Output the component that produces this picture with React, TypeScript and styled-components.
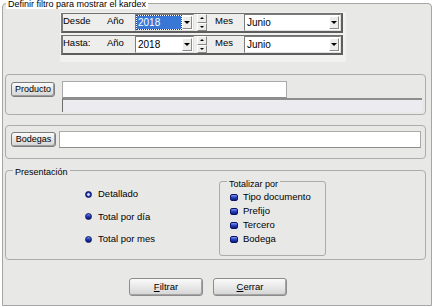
import styled, { createGlobalStyle } from "styled-components"

const GlobalStyle = createGlobalStyle`
  html, body {
    margin: 0;
    padding: 0;
    background: #ffffff;
  }
  body {
    font-family: "Liberation Sans", Arial, sans-serif;
    font-size: 9px;
    color: #000;
  }
`

const App = () => {
  return (
    <>
      <GlobalStyle />
      <Frame>
        <Legend $left={3} $top={-5} $bg="#ffffff">Definir filtro para mostrar el kardex</Legend>
        <DatePanel>
          <DateRow>
            <RowLabel $w={44}>Desde</RowLabel>
            <RowLabel $w={28}>Año</RowLabel>
            <Combo $w={59}>
              <ComboValue $selected>2018</ComboValue>
              <DropButton />
            </Combo>
            <Spinner>
              <SpinButton $up />
              <SpinButton />
            </Spinner>
            <RowLabel $w={29}>Mes</RowLabel>
            <Combo $w={97}>
              <ComboValue>Junio</ComboValue>
              <DropButton />
            </Combo>
          </DateRow>
          <DateRow>
            <RowLabel $w={44}>Hasta:</RowLabel>
            <RowLabel $w={28}>Año</RowLabel>
            <Combo $w={59}>
              <ComboValue>2018</ComboValue>
              <DropButton />
            </Combo>
            <Spinner>
              <SpinButton $up />
              <SpinButton />
            </Spinner>
            <RowLabel $w={29}>Mes</RowLabel>
            <Combo $w={97}>
              <ComboValue>Junio</ComboValue>
              <DropButton />
            </Combo>
          </DateRow>
        </DatePanel>

        <GroupBox $top={12} $h={41}>
          <PickerRow $pt={6}>
            <SmallButton $w={44}>Producto</SmallButton>
            <ProductFields>
              <TextField $w={225} />
              <InfoStrip />
            </ProductFields>
          </PickerRow>
        </GroupBox>

        <GroupBox $top={10} $h={34}>
          <PickerRow $pt={5}>
            <SmallButton $w={45}>Bodegas</SmallButton>
            <TextField $w={362} $ml={3} />
          </PickerRow>
        </GroupBox>

        <GroupBox $top={11} $h={90}>
          <Legend $left={7} $top={-4} $bg="#e8e8e6">Presentación</Legend>
          <PresentationBody>
            <RadioColumn>
              <OptionRow><Radio $checked />Detallado</OptionRow>
              <OptionRow><Radio />Total por día</OptionRow>
              <OptionRow><Radio />Total por mes</OptionRow>
            </RadioColumn>
            <TotalBox>
              <Legend $left={7} $top={-3} $bg="#e8e8e6">Totalizar por</Legend>
              <CheckRow><Check />Tipo documento</CheckRow>
              <CheckRow><Check />Prefijo</CheckRow>
              <CheckRow><Check />Tercero</CheckRow>
              <CheckRow><Check />Bodega</CheckRow>
            </TotalBox>
          </PresentationBody>
        </GroupBox>

        <Actions>
          <ActionButton><u>F</u>iltrar</ActionButton>
          <ActionButton><u>C</u>errar</ActionButton>
        </Actions>
      </Frame>
    </>
  )
}

const Frame = styled.div`
  position: relative;
  box-sizing: border-box;
  margin: 3px 0 0 2px;
  width: 430px;
  height: 303px;
  border: 1px solid #a6a6a6;
  border-radius: 4px 4px 0 0;
  background: #e8e8e6;
  display: flex;
  flex-direction: column;
`
const Legend = styled.span<{ $left: number; $top: number; $bg: string }>`
  position: absolute;
  left: ${p => p.$left}px;
  top: ${p => p.$top}px;
  padding: 0 2px;
  line-height: 10px;
  white-space: nowrap;
  background: ${p => p.$bg};
`
const DatePanel = styled.div`
  box-sizing: border-box;
  margin: 8px 0 0 57px;
  width: 286px;
  height: 50px;
  padding: 1px;
  background: #f1f1ef;
  display: flex;
  flex-direction: column;
  gap: 2px;
`
const DateRow = styled.div`
  box-sizing: border-box;
  width: 282px;
  height: 20px;
  border-top: 1px solid #707070;
  border-left: 2px solid #7a7a7a;
  border-right: 2px solid #5e5e5e;
  border-bottom: 2px solid #5e5e5e;
  background: #eeeeec;
  display: flex;
  align-items: center;
`
const RowLabel = styled.div<{ $w: number }>`
  width: ${p => p.$w}px;
  align-self: flex-start;
  padding-top: 1px;
  line-height: 11px;
  font-size: 9.5px;
  flex-shrink: 0;
`
const Combo = styled.div<{ $w: number }>`
  box-sizing: border-box;
  width: ${p => p.$w}px;
  height: 17px;
  flex-shrink: 0;
  border: 1px solid;
  border-color: #7c7c7c #e0e0e0 #e0e0e0 #7c7c7c;
  background: #fff;
  padding: 1px;
  display: flex;
`
const ComboValue = styled.div<{ $selected?: boolean }>`
  flex: 1;
  margin-right: 1px;
  padding-left: 1px;
  line-height: 13px;
  font-size: 10px;
  color: ${p => (p.$selected ? "#fff" : "#000")};
  background: ${p => (p.$selected ? "#3877d6" : "transparent")};
  outline: ${p => (p.$selected ? "1px dotted #1c3f80" : "none")};
`
const DropButton = styled.div`
  box-sizing: border-box;
  width: 10px;
  height: 13px;
  border: 1px solid;
  border-color: #ffffff #8a8a8a #8a8a8a #ffffff;
  background: #ececea;
  display: flex;
  align-items: center;
  justify-content: center;
  &::after {
    content: "";
    border-left: 3px solid transparent;
    border-right: 3px solid transparent;
    border-top: 3px solid #000;
  }
`
const Spinner = styled.div`
  margin: 0 8px 0 3px;
  width: 10px;
  height: 17px;
  display: flex;
  flex-direction: column;
`
const SpinButton = styled.div<{ $up?: boolean }>`
  box-sizing: border-box;
  flex: 1;
  border: 1px solid;
  border-color: #ffffff #8a8a8a #8a8a8a #ffffff;
  background: #ececea;
  display: flex;
  align-items: center;
  justify-content: center;
  &::after {
    content: "";
    border-left: 2px solid transparent;
    border-right: 2px solid transparent;
    ${p => (p.$up ? "border-bottom: 2px solid #000;" : "border-top: 2px solid #000;")}
  }
`
const GroupBox = styled.div<{ $top: number; $h: number }>`
  position: relative;
  box-sizing: border-box;
  margin: ${p => p.$top}px 0 0 2px;
  width: 421px;
  height: ${p => p.$h}px;
  border: 1px solid #acacac;
  border-radius: 4px;
`
const PickerRow = styled.div<{ $pt: number }>`
  display: flex;
  align-items: flex-start;
  padding: ${p => p.$pt}px 0 0 5px;
`
const SmallButton = styled.div<{ $w: number }>`
  box-sizing: border-box;
  margin-top: 1px;
  width: ${p => p.$w}px;
  height: 15px;
  flex-shrink: 0;
  border: 1px solid #7d7d7d;
  border-radius: 3px;
  background: linear-gradient(#fbfbfb, #e6e6e6 50%, #d6d6d6);
  box-shadow: inset -1px -1px 0 #9e9e9e;
  text-align: center;
  line-height: 13px;
`
const ProductFields = styled.div`
  margin-left: 7px;
  display: flex;
  flex-direction: column;
`
const TextField = styled.div<{ $w: number; $ml?: number }>`
  box-sizing: border-box;
  margin-left: ${p => p.$ml ?? 0}px;
  width: ${p => p.$w}px;
  height: 17px;
  border: 1px solid #a9a9a9;
  border-bottom-color: #8c8c8c;
  background: #fff;
`
const InfoStrip = styled.div`
  box-sizing: border-box;
  width: 360px;
  height: 14px;
  border-top: 2px solid #8e8e8e;
  border-left: 1px solid #6e6e6e;
  background: #ececf0;
`
const PresentationBody = styled.div`
  display: flex;
  align-items: flex-start;
  padding-left: 79px;
`
const RadioColumn = styled.div`
  width: 134px;
  margin-top: 17px;
  display: flex;
  flex-direction: column;
  gap: 10.5px;
`
const OptionRow = styled.div`
  display: flex;
  align-items: center;
  height: 12px;
  line-height: 12px;
  font-size: 9.5px;
`
const Radio = styled.span<{ $checked?: boolean }>`
  box-sizing: border-box;
  width: 7px;
  height: 7px;
  margin-right: 6px;
  border-radius: 50%;
  border: 1px solid #0b1366;
  background: ${p =>
    p.$checked
      ? "radial-gradient(circle at 50% 50%, #c9d6ff 0 1px, #3550c8 1.6px, #14218a 2.5px)"
      : "linear-gradient(#6f8ef0, #1c2fa8 55%, #0e1a7a)"};
`
const TotalBox = styled.div`
  position: relative;
  box-sizing: border-box;
  margin-top: 10px;
  width: 107px;
  height: 75px;
  padding: 8px 0 0 10px;
  border: 1px solid #acacac;
  border-radius: 3px;
`
const CheckRow = styled.div`
  display: flex;
  align-items: center;
  height: 14px;
  line-height: 14px;
  font-size: 9.5px;
`
const Check = styled.span`
  box-sizing: border-box;
  width: 8px;
  height: 7px;
  margin-right: 5px;
  border-radius: 2px;
  border: 1px solid #0b1366;
  background: linear-gradient(#7a96f2, #2a44c0 50%, #0e1a7a);
`
const Actions = styled.div`
  display: flex;
  gap: 10px;
  margin: 18px 0 0 126px;
`
const ActionButton = styled.div`
  box-sizing: border-box;
  width: 74px;
  height: 18px;
  border: 1px solid #8c8c8c;
  border-radius: 3px;
  background: linear-gradient(#fafafa, #e8e8e8 50%, #d4d4d4);
  box-shadow: inset -1px -1px 0 #a4a4a4;
  text-align: center;
  line-height: 16px;
  font-size: 9.5px;
`

export default App
